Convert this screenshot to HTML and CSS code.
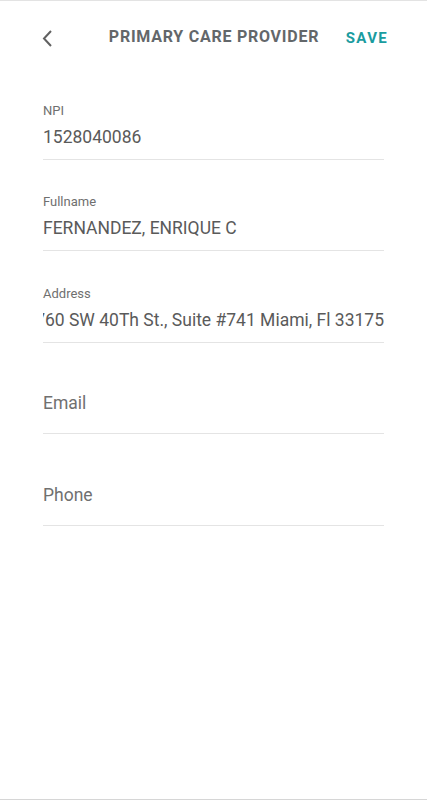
FILE: index.html
```html
<!DOCTYPE html>
<html lang="en">
<head>
  <meta charset="UTF-8" />
  <title>Primary Care Provider</title>
  <link rel="stylesheet" href="styles.css">
</head>
<body>
  <div class="screen">
    <header class="topbar">
      <button class="back-btn" aria-label="Back">
        <svg width="16" height="20" viewBox="0 0 16 20">
          <polyline points="11,3 4,10.5 11,18" fill="none" stroke="#616161" stroke-width="2" />
        </svg>
      </button>
      <div class="title">PRIMARY CARE PROVIDER</div>
      <button class="save-btn">SAVE</button>
    </header>

    <div class="form">
      <div class="field">
        <div class="label">NPI</div>
        <div class="value">1528040086</div>
      </div>
      <div class="field">
        <div class="label">Fullname</div>
        <div class="value">FERNANDEZ, ENRIQUE C</div>
      </div>
      <div class="field">
        <div class="label">Address</div>
        <div class="value scrolled"><span>7760 SW 40Th St., Suite #741 Miami, Fl 33175</span></div>
      </div>
      <div class="field empty">
        <div class="placeholder">Email</div>
      </div>
      <div class="field empty">
        <div class="placeholder">Phone</div>
      </div>
    </div>
  </div>
</body>
</html>
```

FILE: styles.css
```css
body {
  margin: 0;
  font-family: Roboto, "Noto Sans", sans-serif;
  background: #fff;
  color: #555;
}

.screen {
  height: 800px;
  box-sizing: border-box;
  border-top: 1px solid #e3e3e3;
  border-bottom: 1px solid #d6d6d6;
}

.topbar {
  height: 67px;
  display: grid;
  grid-template-columns: 1fr auto 1fr;
  align-items: center;
  padding: 0 39px 0 40px;
}

.back-btn {
  justify-self: start;
  background: none;
  border: none;
  padding: 0;
  display: flex;
  cursor: pointer;
  margin-top: 7px;
}

.title {
  font-size: 16px;
  font-weight: 700;
  color: #63676a;
  letter-spacing: 0.75px;
  margin-top: 4px;
}

.save-btn {
  justify-self: end;
  background: none;
  border: none;
  padding: 0;
  font-family: inherit;
  font-size: 15px;
  font-weight: 700;
  letter-spacing: 1.3px;
  color: #1a9c9f;
  cursor: pointer;
  margin-top: 7px;
}

.form {
  padding: 0 43px;
}

.field {
  padding: 34.5px 0 10px;
  border-bottom: 1px solid #e4e4e4;
}

.field.empty {
  padding: 48.5px 0 18px;
}

.label {
  font-size: 13px;
  line-height: 16px;
  color: #6f6f6f;
  margin-bottom: 6px;
}

.value, .placeholder {
  font-size: 17.5px;
  line-height: 24px;
  color: #5a5a5a;
}

.placeholder {
  color: #707070;
}

.value.scrolled {
  display: flex;
  justify-content: flex-end;
  overflow: hidden;
  white-space: nowrap;
}
```
